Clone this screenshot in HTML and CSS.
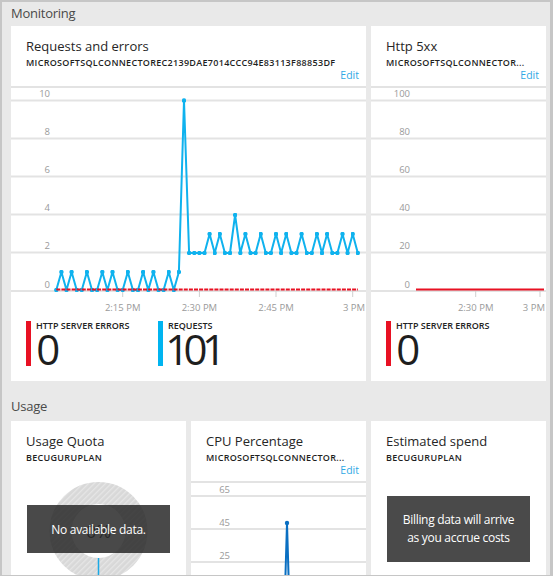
FILE: index.html
```html
<!DOCTYPE html>
<html>
<head>
<meta charset="utf-8">
<link rel="stylesheet" href="styles.css">
</head>
<body>
<div class="frame">
  <div class="section-title sec-mon">Monitoring</div>
  <div class="grid top">
    <div class="tile wide">
      <div class="tile-head">
        <div class="tile-title">Requests and errors</div>
        <div class="tile-sub">MICROSOFTSQLCONNECTOREC2139DAE7014CCC94E83113F88853DF</div>
        <div class="edit">Edit</div>
      </div>
      <svg class="chart" width="355" height="232" viewBox="0 0 355 232">
        <defs>
          <marker id="dot" viewBox="0 0 4 4" refX="2" refY="2" markerWidth="4.4" markerHeight="4.4" markerUnits="userSpaceOnUse">
            <circle cx="2" cy="2" r="2" fill="#0fb2ee"/>
          </marker>
        </defs>
        <g class="grid-lines">
          <line x1="0" y1="1" x2="355" y2="1"/>
          <line x1="0" y1="14.5" x2="355" y2="14.5"/>
          <line x1="0" y1="52.5" x2="355" y2="52.5"/>
          <line x1="0" y1="90.5" x2="355" y2="90.5"/>
          <line x1="0" y1="128.5" x2="355" y2="128.5"/>
          <line x1="0" y1="166.5" x2="355" y2="166.5"/>
          <line x1="0" y1="205" x2="355" y2="205"/>
        </g>
        <g class="ticks">
          <line x1="111.7" y1="205" x2="111.7" y2="211"/>
          <line x1="188.4" y1="205" x2="188.4" y2="211"/>
          <line x1="265" y1="205" x2="265" y2="211"/>
          <line x1="341.7" y1="205" x2="341.7" y2="211"/>
        </g>
        <g class="ylabels">
          <text x="39" y="11.3">10</text>
          <text x="39" y="49.3">8</text>
          <text x="39" y="87.3">6</text>
          <text x="39" y="125.3">4</text>
          <text x="39" y="163.3">2</text>
          <text x="39" y="201.8">0</text>
        </g>
        <g class="xlabels">
          <text x="111.7" y="224.5">2:15 PM</text>
          <text x="188.4" y="224.5">2:30 PM</text>
          <text x="265" y="224.5">2:45 PM</text>
          <text x="343" y="224.5">3 PM</text>
        </g>
        <polyline class="series-blue" marker-start="url(#dot)" marker-mid="url(#dot)" marker-end="url(#dot)" points="45.3,204 50.4,186 55.5,204 60.6,186 65.7,204 70.8,204 75.9,186 81,204 86.1,204 91.3,186 96.4,204 101.5,186 106.6,204 111.7,204 116.8,186 121.9,204 127,204 132.1,186 137.3,204 142.4,186 147.5,204 152.6,204 157.7,186 162.8,204 167.9,186 173,14.5 178.1,167 183.3,167 188.4,167 193.5,167 198.6,148 203.7,167 208.8,148 213.9,167 219,167 224.1,129 229.3,167 234.4,148 239.5,167 244.6,167 249.7,148 254.8,167 259.9,167 265,148 270.1,167 275.3,148 280.4,167 285.5,167 290.6,148 295.7,167 300.8,167 305.9,148 311,167 316.1,148 321.3,167 326.4,167 331.5,148 336.6,167 341.7,148 346.8,167"/>
        <line class="series-red dashed" x1="45.3" y1="203.5" x2="347" y2="203.5"/>
      </svg>
      <div class="stats">
        <div class="stat">
          <div class="bar red"></div>
          <div class="stat-text">
            <div class="stat-label">HTTP SERVER ERRORS</div>
            <div class="stat-value">0</div>
          </div>
        </div>
        <div class="stat">
          <div class="bar blue"></div>
          <div class="stat-text">
            <div class="stat-label">REQUESTS</div>
            <div class="stat-value">101</div>
          </div>
        </div>
      </div>
    </div>

    <div class="tile">
      <div class="tile-head">
        <div class="tile-title">Http 5xx</div>
        <div class="tile-sub">MICROSOFTSQLCONNECTOR...</div>
        <div class="edit">Edit</div>
      </div>
      <svg class="chart" width="175" height="232" viewBox="0 0 175 232">
        <g class="grid-lines">
          <line x1="0" y1="1" x2="175" y2="1"/>
          <line x1="0" y1="14.5" x2="175" y2="14.5"/>
          <line x1="0" y1="52.5" x2="175" y2="52.5"/>
          <line x1="0" y1="90.5" x2="175" y2="90.5"/>
          <line x1="0" y1="128.5" x2="175" y2="128.5"/>
          <line x1="0" y1="166.5" x2="175" y2="166.5"/>
          <line x1="0" y1="205" x2="175" y2="205"/>
        </g>
        <g class="ticks">
          <line x1="104.7" y1="205" x2="104.7" y2="211"/>
          <line x1="169" y1="205" x2="169" y2="211"/>
        </g>
        <g class="ylabels">
          <text x="39" y="11.3">100</text>
          <text x="39" y="49.3">80</text>
          <text x="39" y="87.3">60</text>
          <text x="39" y="125.3">40</text>
          <text x="39" y="163.3">20</text>
          <text x="39" y="201.8">0</text>
        </g>
        <g class="xlabels">
          <text x="104.7" y="224.5">2:30 PM</text>
          <text x="174" y="224.5" class="end">3 PM</text>
        </g>
        <line class="series-red" x1="45" y1="203.5" x2="173" y2="203.5"/>
      </svg>
      <div class="stats">
        <div class="stat">
          <div class="bar red"></div>
          <div class="stat-text">
            <div class="stat-label">HTTP SERVER ERRORS</div>
            <div class="stat-value">0</div>
          </div>
        </div>
      </div>
    </div>
  </div>

  <div class="section-title sec-usage">Usage</div>
  <div class="grid bottom">
    <div class="tile">
      <div class="tile-head">
        <div class="tile-title">Usage Quota</div>
        <div class="tile-sub">BECUGURUPLAN</div>
      </div>
      <svg class="donut" width="175" height="140" viewBox="0 0 175 140">
        <defs>
          <pattern id="hatch" width="4" height="4" patternUnits="userSpaceOnUse" patternTransform="rotate(45)">
            <rect width="4" height="4" fill="#d8d8d8"/>
            <rect width="1.3" height="4" fill="#e6e6e6"/>
          </pattern>
        </defs>
        <circle cx="87.5" cy="50" r="38" fill="none" stroke="url(#hatch)" stroke-width="22"/>
        <text x="87.5" y="57" class="pct">0%</text>
        <line x1="87.5" y1="77" x2="87.5" y2="140" class="quota-line"/>
      </svg>
      <div class="overlay">No available data.</div>
    </div>

    <div class="tile">
      <div class="tile-head">
        <div class="tile-title">CPU Percentage</div>
        <div class="tile-sub">MICROSOFTSQLCONNECTOR...</div>
        <div class="edit">Edit</div>
      </div>
      <svg class="chart" width="175" height="140" viewBox="0 0 175 140">
        <g class="grid-lines">
          <line x1="0" y1="1" x2="175" y2="1"/>
          <line x1="0" y1="15" x2="175" y2="15"/>
          <line x1="0" y1="48" x2="175" y2="48"/>
          <line x1="0" y1="81" x2="175" y2="81"/>
        </g>
        <g class="ylabels">
          <text x="39" y="12">65</text>
          <text x="39" y="45">45</text>
          <text x="39" y="78">25</text>
        </g>
        <polyline class="series-dark" points="94,110 96,42 98,110"/>
        <circle cx="96" cy="42" r="2.2" fill="#0a6fc2"/>
      </svg>
    </div>

    <div class="tile">
      <div class="tile-head">
        <div class="tile-title">Estimated spend</div>
        <div class="tile-sub">BECUGURUPLAN</div>
      </div>
      <div class="billing">Billing data will arrive<br>as you accrue costs</div>
    </div>
  </div>
</div>
</body>
</html>
```

FILE: styles.css
```css
* { box-sizing: border-box; }
html, body { margin: 0; padding: 0; }
body {
  width: 553px;
  height: 576px;
  overflow: hidden;
  font-family: "Open Sans", "Noto Sans", sans-serif;
  background: #e9e9e9;
}
.frame {
  width: 553px;
  height: 576px;
  border-style: solid;
  border-color: #c6c6c6;
  border-width: 2px 3px 1px 2px;
  padding: 0 4px 0 9px;
  overflow: hidden;
  background: #e9e9e9;
}
.section-title {
  font-size: 13px;
  line-height: 22px;
  color: #4a4a4a;
  letter-spacing: -0.25px;
}
.sec-mon { height: 24px; }
.sec-usage { height: 40px; padding-top: 14px; }
.grid {
  display: grid;
  grid-template-columns: repeat(3, 175px);
  column-gap: 5px;
}
.tile { background: #fff; position: relative; }
.tile.wide { grid-column: span 2; }
.top .tile { height: 355px; }
.bottom .tile { height: 200px; }
.tile-head {
  height: 60px;
  padding: 11px 7px 0 15px;
}
.tile-title {
  font-size: 13px;
  line-height: 18px;
  color: #262626;
  white-space: nowrap;
}
.tile-sub {
  font-size: 9px;
  font-weight: 600;
  line-height: 13px;
  margin-top: 1px;
  color: #1f1f1f;
  letter-spacing: 0.3px;
  white-space: nowrap;
  overflow: hidden;
}
.edit {
  font-size: 10.5px;
  line-height: 12px;
  color: #2ea8e5;
  text-align: right;
}
.chart { display: block; }
.grid-lines line { stroke: #e3e3e3; stroke-width: 2; }
.ticks line { stroke: #cfcfcf; stroke-width: 1; }
.ylabels text {
  font-size: 9.5px;
  fill: #9a9a9a;
  text-anchor: end;
}
.xlabels text {
  font-size: 9.5px;
  fill: #9a9a9a;
  text-anchor: middle;
}
.xlabels text.end { text-anchor: end; }
.series-blue {
  fill: none;
  stroke: #0fb2ee;
  stroke-width: 2;
  stroke-linejoin: round;
}
.series-red { stroke: #e81123; stroke-width: 2; }
.series-red.dashed { stroke-dasharray: 4 1.1; }
.series-dark {
  fill: none;
  stroke: #0a6fc2;
  stroke-width: 2;
}
.stats {
  display: flex;
  margin-top: 3px;
  padding-left: 15px;
  height: 45px;
}
.stat { display: flex; gap: 5px; width: 132px; }
.bar { width: 5px; height: 45px; flex: none; }
.bar.red { background: #e81123; }
.bar.blue { background: #00b4f0; }
.stat-label {
  font-size: 9px;
  font-weight: 600;
  line-height: 10px;
  color: #222;
  white-space: nowrap;
}
.stat-value {
  font-size: 42px;
  line-height: 35px;
  color: #1e1e1e;
  letter-spacing: -3px;
  font-variant-numeric: proportional-nums;
}
.donut { display: block; }
.pct { font-size: 18px; fill: #333; text-anchor: middle; }
.quota-line { stroke: #1aa9e6; stroke-width: 1.5; }
.overlay {
  position: absolute;
  left: 16px;
  top: 84px;
  width: 143px;
  height: 48px;
  background: rgba(38, 38, 38, 0.84);
  color: #fff;
  font-size: 12px;
  letter-spacing: -0.3px;
  display: flex;
  align-items: center;
  justify-content: center;
}
.billing {
  margin: 15px 0 0 16px;
  width: 143px;
  height: 66px;
  background: #4a4a4a;
  color: #fff;
  font-size: 12px;
  line-height: 18px;
  letter-spacing: -0.3px;
  text-align: center;
  display: flex;
  align-items: center;
  justify-content: center;
}
```
